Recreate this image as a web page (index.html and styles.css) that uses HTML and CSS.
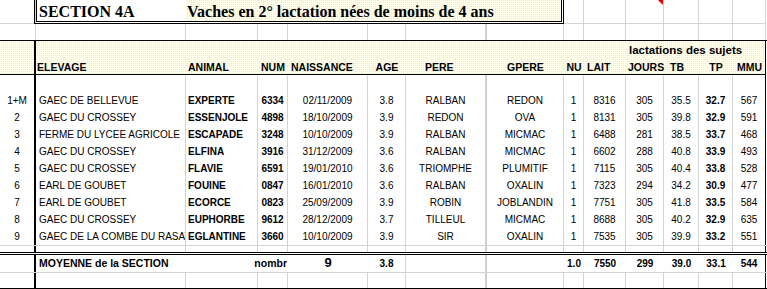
FILE: index.html
```html
<!DOCTYPE html>
<html lang="fr">
<head>
<meta charset="utf-8">
<title>Section 4A</title>
<link rel="stylesheet" href="styles.css">
</head>
<body>
<div class="sheet">
  <div class="row r-title">
    <div class="c t-a"></div>
    <div class="title-box">
      <div class="title-left">SECTION 4A</div>
      <div class="title-right yel">Vaches en 2° lactation nées de moins de 4 ans</div>
    </div>
    <div class="c t-c"></div>
    <div class="c t-c"></div>
    <div class="c t-c has-note"><span class="note"></span></div>
    <div class="c t-c"></div>
    <div class="c t-c"></div>
    <div class="c t-c"></div>
  </div>

  <div class="row r-blank r2">
    <div class="c"></div><div class="c"></div><div class="c"></div><div class="c"></div><div class="c"></div><div class="c"></div><div class="c g2"></div><div class="c"></div><div class="c"></div><div class="c"></div><div class="c"></div><div class="c"></div><div class="c"></div><div class="c"></div>
  </div>

  <div class="head yel">
    <div class="h-a"></div>
    <div class="lact">lactations des sujets</div>
    <div class="lbl l-elev">ELEVAGE</div>
    <div class="lbl l-anim">ANIMAL</div>
    <div class="lbl l-num">NUM</div>
    <div class="lbl l-nais">NAISSANCE</div>
    <div class="lbl l-age">AGE</div>
    <div class="lbl l-pere">PERE</div>
    <div class="lbl l-gpere">GPERE</div>
    <div class="lbl l-nu">NU</div>
    <div class="lbl l-lait">LAIT</div>
    <div class="lbl l-jours">JOURS</div>
    <div class="lbl l-tb">TB</div>
    <div class="lbl l-tp">TP</div>
    <div class="lbl l-mmu">MMU</div>
  </div>

  <div class="row r-blank low">
    <div class="c"></div><div class="c"></div><div class="c"></div><div class="c"></div><div class="c"></div><div class="c"></div><div class="c g2"></div><div class="c"></div><div class="c"></div><div class="c"></div><div class="c"></div><div class="c"></div><div class="c"></div><div class="c"></div>
  </div>

  <div class="row data low">
    <div class="c">1+M</div><div class="c elev">GAEC DE BELLEVUE</div><div class="c anim">EXPERTE</div><div class="c b">6334</div><div class="c">02/11/2009</div><div class="c">3.8</div><div class="c g2">RALBAN</div><div class="c">REDON</div><div class="c">1</div><div class="c">8316</div><div class="c">305</div><div class="c">35.5</div><div class="c b">32.7</div><div class="c">567</div>
  </div>
  <div class="row data low">
    <div class="c">2</div><div class="c elev">GAEC DU CROSSEY</div><div class="c anim">ESSENJOLE</div><div class="c b">4898</div><div class="c">18/10/2009</div><div class="c">3.9</div><div class="c g2">REDON</div><div class="c">OVA</div><div class="c">1</div><div class="c">8131</div><div class="c">305</div><div class="c">39.8</div><div class="c b">32.9</div><div class="c">591</div>
  </div>
  <div class="row data low">
    <div class="c">3</div><div class="c elev">FERME DU LYCEE AGRICOLE</div><div class="c anim">ESCAPADE</div><div class="c b">3248</div><div class="c">10/10/2009</div><div class="c">3.9</div><div class="c g2">RALBAN</div><div class="c">MICMAC</div><div class="c">1</div><div class="c">6488</div><div class="c">281</div><div class="c">38.5</div><div class="c b">33.7</div><div class="c">468</div>
  </div>
  <div class="row data low">
    <div class="c">4</div><div class="c elev">GAEC DU CROSSEY</div><div class="c anim">ELFINA</div><div class="c b">3916</div><div class="c">31/12/2009</div><div class="c">3.6</div><div class="c g2">RALBAN</div><div class="c">MICMAC</div><div class="c">1</div><div class="c">6602</div><div class="c">288</div><div class="c">40.8</div><div class="c b">33.9</div><div class="c">493</div>
  </div>
  <div class="row data low">
    <div class="c">5</div><div class="c elev">GAEC DU CROSSEY</div><div class="c anim">FLAVIE</div><div class="c b">6591</div><div class="c">19/01/2010</div><div class="c">3.6</div><div class="c g2">TRIOMPHE</div><div class="c">PLUMITIF</div><div class="c">1</div><div class="c">7115</div><div class="c">305</div><div class="c">40.4</div><div class="c b">33.8</div><div class="c">528</div>
  </div>
  <div class="row data low">
    <div class="c">6</div><div class="c elev">EARL DE GOUBET</div><div class="c anim">FOUINE</div><div class="c b">0847</div><div class="c">16/01/2010</div><div class="c">3.6</div><div class="c g2">RALBAN</div><div class="c">OXALIN</div><div class="c">1</div><div class="c">7323</div><div class="c">294</div><div class="c">34.2</div><div class="c b">30.9</div><div class="c">477</div>
  </div>
  <div class="row data low">
    <div class="c">7</div><div class="c elev">EARL DE GOUBET</div><div class="c anim">ECORCE</div><div class="c b">0823</div><div class="c">25/09/2009</div><div class="c">3.9</div><div class="c g2">ROBIN</div><div class="c">JOBLANDIN</div><div class="c">1</div><div class="c">7751</div><div class="c">305</div><div class="c">41.8</div><div class="c b">33.5</div><div class="c">584</div>
  </div>
  <div class="row data low">
    <div class="c">8</div><div class="c elev">GAEC DU CROSSEY</div><div class="c anim">EUPHORBE</div><div class="c b">9612</div><div class="c">28/12/2009</div><div class="c">3.7</div><div class="c g2">TILLEUL</div><div class="c">MICMAC</div><div class="c">1</div><div class="c">8688</div><div class="c">305</div><div class="c">40.2</div><div class="c b">32.9</div><div class="c">635</div>
  </div>
  <div class="row data low">
    <div class="c">9</div><div class="c elev">GAEC DE LA COMBE DU RASAT</div><div class="c anim">EGLANTINE</div><div class="c b">3660</div><div class="c">10/10/2009</div><div class="c">3.9</div><div class="c g2">SIR</div><div class="c">OXALIN</div><div class="c">1</div><div class="c">7535</div><div class="c">305</div><div class="c">39.9</div><div class="c b">33.2</div><div class="c">551</div>
  </div>

  <div class="row r-gap low">
    <div class="c"></div><div class="c"></div><div class="c"></div><div class="c"></div><div class="c"></div><div class="c"></div><div class="c g2"></div><div class="c"></div><div class="c"></div><div class="c"></div><div class="c"></div><div class="c"></div><div class="c"></div><div class="c"></div>
  </div>

  <div class="row r-foot low">
    <div class="c"></div>
    <div class="f-moy">MOYENNE de la SECTION</div>
    <div class="f-nombr">nombr</div>
    <div class="f-count">9</div>
    <div class="f-cell lined">3.8</div>
    <div class="f-cell lined2"></div>
    <div class="f-cell"></div>
    <div class="f-cell">1.0</div>
    <div class="f-cell">7550</div>
    <div class="f-cell">299</div>
    <div class="f-cell">39.0</div>
    <div class="f-cell">33.1</div>
    <div class="f-cell last">544</div>
  </div>

  <div class="row r-last low">
    <div class="c"></div><div class="c"></div><div class="c"></div><div class="c"></div><div class="c"></div><div class="c"></div><div class="c g2"></div><div class="c"></div><div class="c"></div><div class="c"></div><div class="c"></div><div class="c"></div><div class="c"></div><div class="c"></div>
  </div>
</div>
</body>
</html>
```

FILE: styles.css
```css
:root {
  --cols: 36px 150px 72px 30px 80px 38px 81px 77px 20px 42px 38px 35px 34px 33px;
  --grid: #d4d4d4;
}

html, body {
  margin: 0;
  padding: 0;
  background: #fff;
}

body {
  font-family: "Liberation Sans", Arial, sans-serif;
  font-size: 10px;
  color: #000;
}

.sheet {
  width: 767px;
  height: 289px;
  overflow: hidden;
}

.yel {
  background-color: #ffffec;
  background-image: conic-gradient(#eeeebf 0 25%, transparent 0);
  background-size: 2px 2px;
}

.row {
  display: grid;
  grid-template-columns: var(--cols);
  box-sizing: border-box;
}

.c {
  box-sizing: border-box;
  border-right: 1px solid var(--grid);
  text-align: center;
  white-space: nowrap;
  overflow: hidden;
}

.c.g2 {
  border-right: 2px solid #cfcfcf;
}

.r-title {
  height: 24px;
}

.t-a {
  border-bottom: 1px solid var(--grid);
}

.t-c {
  border-bottom: 1px solid var(--grid);
}

.title-box {
  grid-column: 2 / 9;
  margin-left: -2px;
  box-sizing: border-box;
  height: 24px;
  border: 3px double #000;
  border-top: none;
  display: flex;
  font-family: "Liberation Serif", "Times New Roman", serif;
  font-weight: bold;
  font-size: 16px;
  line-height: 23px;
  white-space: nowrap;
  overflow: hidden;
}

.title-left {
  width: 149px;
  padding-left: 2px;
  box-sizing: border-box;
  background: #fff;
}

.title-right {
  flex: 1;
  padding-left: 1px;
}

.has-note {
  position: relative;
}

.note {
  position: absolute;
  top: 0;
  right: 0;
  width: 0;
  height: 0;
  border-top: 5px solid #e00000;
  border-left: 5px solid transparent;
}

.r2 {
  height: 17px;
  border-bottom: 1px solid #000;
}

.low > .c:first-child {
  border-right: 2px solid #000;
}

.low > .c:last-child {
  border-right: 1px solid #000;
}

.head {
  display: grid;
  grid-template-columns: var(--cols);
  grid-template-rows: 17px 16px;
  height: 34px;
  box-sizing: border-box;
  border-bottom: 1px solid #000;
  border-right: 1px solid #000;
  width: 766px;
  font-weight: bold;
  font-size: 10.5px;
  line-height: 16px;
  white-space: nowrap;
}

.h-a {
  grid-column: 1;
  grid-row: 1 / 3;
  border-right: 2px solid #000;
}

.lact {
  grid-column: 11 / 15;
  grid-row: 1;
  padding-left: 3px;
  font-size: 11.5px;
  line-height: 18px;
}

.lbl {
  grid-row: 2;
  line-height: 18px;
}

.l-elev { grid-column: 2; padding-left: 1px; }
.l-anim { grid-column: 3; padding-left: 2px; }
.l-num { grid-column: 4; text-align: center; }
.l-nais { grid-column: 5; padding-left: 3px; }
.l-age { grid-column: 6; text-align: center; }
.l-pere { grid-column: 7; padding-left: 19px; }
.l-gpere { grid-column: 8; text-align: center; }
.l-nu { grid-column: 9; text-align: center; }
.l-lait { grid-column: 10; padding-left: 3px; }
.l-jours { grid-column: 11; padding-left: 2px; }
.l-tb { grid-column: 12; padding-left: 6px; }
.l-tp { grid-column: 13; text-align: center; }
.l-mmu { grid-column: 14; text-align: center; }

.r-blank.low {
  height: 17px;
}

.data {
  height: 17px;
  line-height: 17px;
}

.data .elev {
  text-align: left;
  padding-left: 3px;
  text-overflow: clip;
}

.data .anim {
  text-align: left;
  padding-left: 2px;
  font-weight: bold;
}

.b {
  font-weight: bold;
}

.r-gap {
  height: 7px;
  border-top: 1px solid var(--grid);
}

.r-foot {
  height: 20px;
  border-top: 3px double #000;
  line-height: 17px;
  font-weight: bold;
  font-size: 10.5px;
  white-space: nowrap;
}

.f-moy {
  grid-column: 2;
  padding-left: 3px;
}

.f-nombr {
  grid-column: 3 / 5;
  text-align: right;
  padding-right: 1px;
}

.f-count {
  grid-column: 5;
  text-align: center;
  font-size: 13px;
  line-height: 16px;
}

.f-cell {
  text-align: center;
  font-size: 10px;
  box-sizing: border-box;
}

.f-cell.lined {
  border-right: 1px solid var(--grid);
}

.f-cell.lined2 {
  border-right: 2px solid #cfcfcf;
}

.f-cell.last {
  border-right: 1px solid #000;
}

.r-last {
  height: 17px;
  border-top: 1px solid var(--grid);
  border-bottom: 1px solid #000;
}
```
